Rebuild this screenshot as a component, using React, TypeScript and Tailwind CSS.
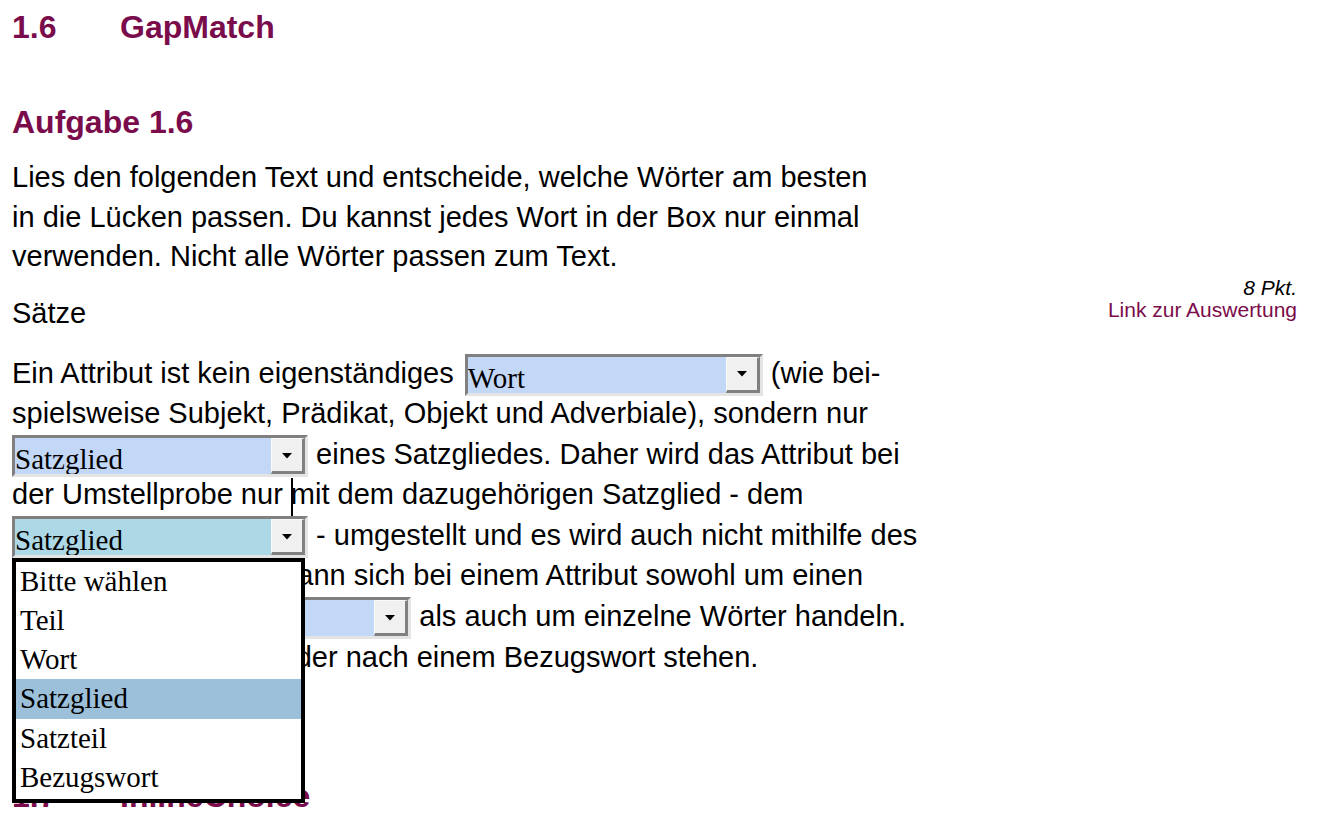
import React from "react";

const PURPLE = "text-[#7b0c4b]";

function Sel({
  value,
  wide,
  focused,
}: {
  value: string;
  wide?: boolean;
  focused?: boolean;
}) {
  return (
    <span
      className={
        "relative inline-flex align-middle -my-1 h-[42px] overflow-hidden border-[3px] border-t-[#808080] border-l-[#808080] border-b-[#e4e4e4] border-r-[#e4e4e4] " +
        (wide ? "ml-[3px] w-[298px] " : "w-[296px] ") +
        (focused ? "bg-[#add8e6]" : "bg-[#c3d7f6]")
      }
    >
      <span className="flex-1 overflow-hidden whitespace-nowrap pt-[3px] text-[29px] leading-[36px] text-black [font-family:'Liberation_Serif','Times_New_Roman',serif]">
        {value}
      </span>
      <span className="flex h-full w-[34px] shrink-0 items-center justify-center border-t border-l border-t-[#fafafa] border-l-[#fafafa] border-r-[3px] border-b-[3px] border-r-[#808080] border-b-[#808080] bg-[#f0f0f0]">
        <svg width="10" height="6" viewBox="0 0 10 6" className="mt-[1px]">
          <polygon points="0,0 10,0 5,5.5" fill="#000" />
        </svg>
      </span>
    </span>
  );
}

export default function App() {
  return (
    <div className="min-h-[824px] w-full overflow-hidden bg-white pl-[12px] pr-[27px] pt-[8px] text-black [font-family:'Liberation_Sans',Arial,sans-serif]">
      <h1 className={"flex text-[32px] font-bold leading-[38px] " + PURPLE}>
        <span className="w-[108px]">1.6</span>
        <span>GapMatch</span>
      </h1>

      <h2 className={"mt-[57px] text-[32px] font-bold leading-[38px] " + PURPLE}>
        Aufgabe 1.6
      </h2>

      <p className="mt-[17px] whitespace-nowrap text-[29px] leading-[39.5px]">
        Lies den folgenden Text und entscheide, welche Wörter am besten
        <br />
        in die Lücken passen. Du kannst jedes Wort in der Box nur einmal
        <br />
        verwenden. Nicht alle Wörter passen zum Text.
      </p>

      <div className="flex items-start justify-between">
        <div className="mt-[17.5px] text-[29px] leading-[39.5px]">Sätze</div>
        <div className="flex flex-col items-end text-[21px] leading-[22px]">
          <span className="italic">8 Pkt.</span>
          <span className={PURPLE}>Link zur Auswertung</span>
        </div>
      </div>

      <div className="relative mt-[19px] whitespace-nowrap text-[29px] leading-[40.6px]">
        <p>
          Ein Attribut ist kein eigenständiges <Sel value="Wort" wide /> (wie bei-
          <br />
          spielsweise Subjekt, Prädikat, Objekt und Adverbiale), sondern nur
          <br />
          <Sel value="Satzglied" /> eines Satzgliedes. Daher wird das Attribut bei
          <br />
          der Umstellprobe nur mit dem dazugehörigen Satzglied - dem
          <br />
          <Sel value="Satzglied" focused /> - umgestellt und es wird auch nicht mithilfe des
          <br />
          Prädikats erfragt. Es kann sich bei einem Attribut sowohl um einen
          <br />
          ganzen <Sel value="Bitte wählen" /> als auch um einzelne Wörter handeln.
          <br />
          Attribute können vor oder nach einem Bezugswort stehen.
        </p>

        <div className="absolute left-[279px] top-[125px] h-[38px] w-[2px] bg-black" />

        <ul className="absolute left-0 top-[205px] z-10 h-[245px] w-[293px] border-[4px] border-black bg-white text-[29px] leading-[39px] text-black [font-family:'Liberation_Serif','Times_New_Roman',serif]">
          <li className="h-[39px] pl-[4px]">Bitte wählen</li>
          <li className="h-[39px] pl-[4px]">Teil</li>
          <li className="h-[39px] pl-[4px]">Wort</li>
          <li className="h-[40px] bg-[#9cc0d9] pl-[4px]">Satzglied</li>
          <li className="h-[39px] pl-[4px]">Satzteil</li>
          <li className="h-[39px] pl-[4px]">Bezugswort</li>
        </ul>
      </div>

      <h2 className={"mt-[99.5px] flex text-[32px] font-bold leading-[38px] " + PURPLE}>
        <span className="w-[108px]">1.7</span>
        <span>InlineChoice</span>
      </h2>
    </div>
  );
}
